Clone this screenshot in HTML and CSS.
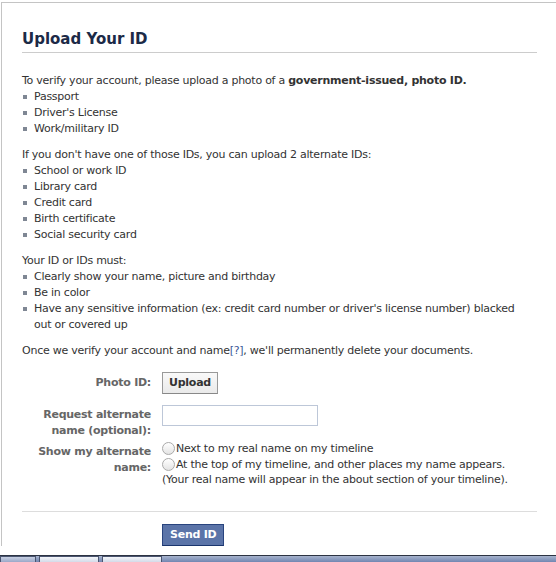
FILE: index.html
```html
<!DOCTYPE html>
<html lang="en">
<head>
    <meta charset="UTF-8">
    <meta name="viewport" content="width=device-width, initial-scale=1.0">
    <title>Upload Your ID</title>
    <link rel="stylesheet" href="styles.css">
</head>
<body>
    <div class="panel">
        <h2>Upload Your ID</h2>
        <div class="intro">
            <p>To verify your account, please upload a photo of a <b>government-issued, photo ID.</b></p>
            <ul>
                <li>Passport</li>
                <li>Driver's License</li>
                <li>Work/military ID</li>
            </ul>
            <p>If you don't have one of those IDs, you can upload 2 alternate IDs:</p>
            <ul>
                <li>School or work ID</li>
                <li>Library card</li>
                <li>Credit card</li>
                <li>Birth certificate</li>
                <li>Social security card</li>
            </ul>
            <p>Your ID or IDs must:</p>
            <ul>
                <li>Clearly show your name, picture and birthday</li>
                <li>Be in color</li>
                <li>Have any sensitive information (ex: credit card number or driver's license number) blacked out or covered up</li>
            </ul>
            <p>Once we verify your account and name<a href="#">[?]</a>, we'll permanently delete your documents.</p>
        </div>

        <div class="form">
            <div class="row row-photo">
                <label>Photo ID:</label>
                <div class="field"><button class="btn">Upload</button></div>
            </div>
            <div class="row row-name">
                <label for="altname">Request alternate name (optional):</label>
                <div class="field"><input type="text" id="altname"></div>
            </div>
            <div class="row row-show">
                <label>Show my alternate name:</label>
                <div class="field options">
                    <div class="opt"><span class="radio"></span>Next to my real name on my timeline</div>
                    <div class="opt"><span class="radio"></span>At the top of my timeline, and other places my name appears.</div>
                    <div class="note">(Your real name will appear in the about section of your timeline).</div>
                </div>
            </div>
        </div>

        <div class="footer">
            <button class="btn btn-send">Send ID</button>
        </div>
    </div>

    <div class="taskbar">
        <span class="task task-start"></span>
        <span class="task"></span>
        <span class="task"></span>
    </div>
</body>
</html>
```
FILE: styles.css
```css
body {
    margin: 0;
    font-family: "DejaVu Sans", "Liberation Sans", sans-serif;
    font-size: 11px;
    letter-spacing: -0.25px;
    color: #333;
    background: #fff;
    height: 562px;
    overflow: hidden;
    position: relative;
}
.panel {
    margin: 2px 0 0 1px;
    width: 515px;
    padding: 0 20px;
    border-top: 1px solid #c4c4c4;
    border-left: 1px solid #c4c4c4;
}
h2 {
    margin: 0;
    padding: 26px 0 3px;
    font-size: 15px;
    line-height: 20px;
    letter-spacing: 0;
    color: #1c2a47;
    border-bottom: 1px solid #ccc;
}
.intro {
    padding-top: 20px;
    line-height: 16px;
}
.intro p {
    margin: 0;
}
.intro ul {
    margin: 0 0 10px;
    padding: 0 12px 0 0;
    list-style: none;
}
.intro li {
    position: relative;
    padding-left: 12px;
}
.intro li::before {
    content: "";
    position: absolute;
    left: 1px;
    top: 6px;
    width: 4px;
    height: 4px;
    background: #7f8794;
}
.intro a {
    color: #3b5998;
    text-decoration: none;
}
.form {
    padding: 13px 0 13px;
    border-bottom: 1px solid #ddd;
}
.row {
    display: flex;
    gap: 11px;
    margin-bottom: 11px;
}
.row-name {
    margin-bottom: 5px;
}
.row-show {
    margin-bottom: 10px;
}
.row label {
    width: 129px;
    text-align: right;
    font-weight: bold;
    color: #666;
    line-height: 16px;
}
.row-photo label {
    padding-top: 3px;
}
.row-name label {
    padding-top: 2px;
}
.btn {
    font-family: inherit;
    font-size: 11px;
    font-weight: bold;
    letter-spacing: -0.25px;
    color: #333;
    background: linear-gradient(#f9f9f9, #eaeaea);
    border: 1px solid #999;
    border-bottom-color: #888;
    padding: 0 6px;
    height: 22px;
    line-height: 20px;
}
input[type="text"] {
    width: 150px;
    height: 15px;
    padding: 2px;
    margin: 0;
    border: 1px solid #bdc7d8;
    font-family: inherit;
    font-size: 11px;
}
.options {
    line-height: 15.5px;
    margin-top: -3px;
}
.opt {
    display: flex;
    align-items: center;
}
.radio {
    width: 13px;
    height: 13px;
    border: 1px solid #aaa;
    border-radius: 50%;
    background: linear-gradient(#fff, #e4e4e4);
    box-sizing: border-box;
    margin-right: 1px;
}
.footer {
    padding: 12px 0 0 140px;
}
.btn-send {
    color: #fff;
    background: #5b74a8;
    border-color: #29447e #29447e #1a356e;
    padding: 0 7px;
}
.taskbar {
    position: absolute;
    left: 0;
    right: 0;
    bottom: 0;
    height: 6px;
    border-top: 1px solid #2c3342;
    background: linear-gradient(#a7b3cd, #7286b2);
    display: flex;
    gap: 3px;
    padding-left: 38px;
}
.task {
    width: 58px;
    background: linear-gradient(#f4f6fa, #d3dae8);
    border: 1px solid #4a5570;
    border-bottom: none;
}
.task-start {
    margin-left: -38px;
    width: 34px;
    background: linear-gradient(#c8d0e2, #9aa8c8);
}
```
